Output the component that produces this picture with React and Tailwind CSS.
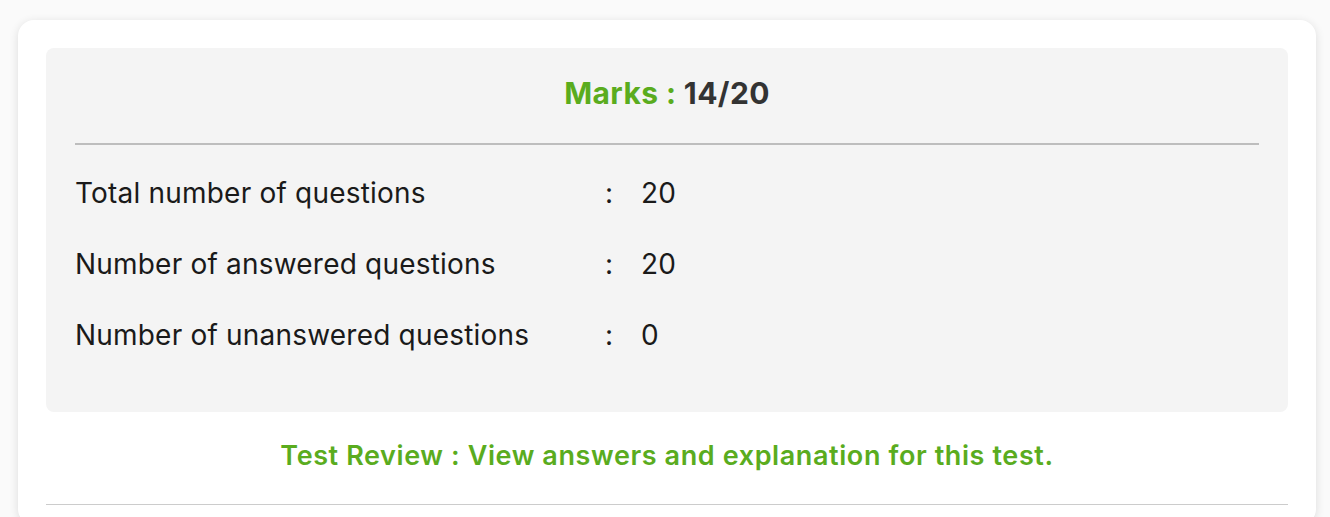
const rows = [
  { label: "Total number of questions", value: "20" },
  { label: "Number of answered questions", value: "20" },
  { label: "Number of unanswered questions", value: "0" },
];

function App() {
  return (
    <div className="min-h-screen bg-[#fafafa] pl-[18px] pr-[14px] pt-[20px] font-['Inter',sans-serif]">
      <div className="rounded-2xl bg-white px-[28px] pt-[28px] shadow-[0_2px_10px_rgba(0,0,0,0.12)]">
        <div className="rounded-lg bg-[#f4f4f4] px-[29px] pb-[42px] pt-[25px]">
          <h2 className="text-center text-[30px] font-bold leading-[40px] tracking-[0.4px] text-[#333]">
            <span className="text-[#5aac1e]">Marks :</span> 14/20
          </h2>
          <div className="mt-[30px] h-[2px] bg-[#bdbdbd]" />
          <div className="mt-[12px]">
            {rows.map((row) => (
              <div key={row.label} className="flex h-[71px] items-center text-[28px] tracking-[0.2px] text-[#1a1a1a]">
                <span className="w-[530px]">{row.label}</span>
                <span className="w-[36px]">:</span>
                <span>{row.value}</span>
              </div>
            ))}
          </div>
        </div>
        <div className="flex h-[92px] items-center justify-center pb-[4px]">
          <p className="text-[27px] font-semibold tracking-[0.6px] text-[#5aac1e]">
            Test Review : View answers and explanation for this test.
          </p>
        </div>
        <div className="h-px bg-[#cccccc]" />
        <div className="h-[20px]" />
      </div>
    </div>
  );
}

export default App;
